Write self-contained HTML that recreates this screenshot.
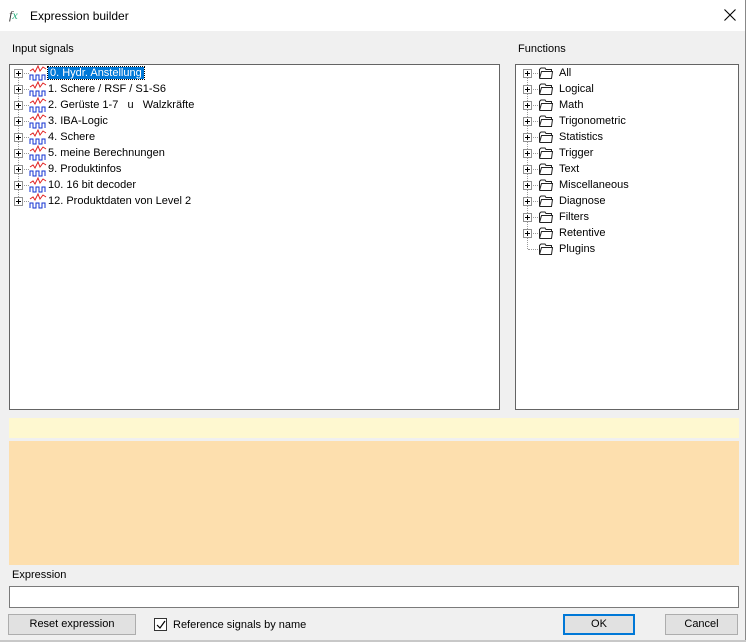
<!DOCTYPE html><html><head><style>
body{margin:0;width:746px;height:642px;background:#f0f0f0;font-family:"Liberation Sans",sans-serif;font-size:11px;color:#000;position:relative;overflow:hidden}
.a{position:absolute}
.tree div{height:16px;line-height:16px;position:relative;white-space:nowrap;font-size:11px}
.pl{position:absolute;width:7px;height:7px;border:1px solid #919191;background:#fff;left:0;top:4px}
.pl:before{content:"";position:absolute;left:1px;top:3px;width:5px;height:1px;background:#000}
.pl:after{content:"";position:absolute;left:3px;top:1px;width:1px;height:5px;background:#000}
.btn{position:absolute;background:#e1e1e1;border:1px solid #adadad;text-align:center;line-height:19px;box-sizing:border-box}
</style></head><body>
<div class="a" style="left:0;top:0;width:746px;height:31px;background:#fff"></div>
<div class="a" style="left:9px;top:8px;font-size:12px;color:#333;font-family:'Liberation Serif',serif;font-style:italic">f<span style="color:#2a7">x</span></div>
<div class="a" style="left:30px;top:9px;font-size:12px">Expression builder</div>
<svg class="a" style="left:724px;top:9px" width="12" height="12"><path d="M0.5 0.5 L11.5 11.5 M11.5 0.5 L0.5 11.5" stroke="#000" stroke-width="1.1"/></svg>
<div class="a" style="left:745px;top:0;width:1px;height:642px;background:#888"></div>
<div class="a" style="left:12px;top:43px">Input signals</div>
<div class="a" style="left:518px;top:43px">Functions</div>
<div class="a" style="left:9px;top:64px;width:489px;height:344px;border:1px solid #646464;background:#fff"></div>
<div class="a" style="left:515px;top:64px;width:222px;height:344px;border:1px solid #646464;background:#fff"></div>
<div class="a tree" style="left:14px;top:65px">
<div style="border-left:1px dotted #999;position:absolute;left:4px;top:8px;height:128px;width:0"></div>
<script>
var s=["0. Hydr. Anstellung","1. Schere / RSF / S1-S6","2. Gerüste 1-7&nbsp;&nbsp; u&nbsp;&nbsp; Walzkräfte","3. IBA-Logic","4. Schere","5. meine Berechnungen","9. Produktinfos","10. 16 bit decoder","12. Produktdaten von Level 2"];
for(var i=0;i<s.length;i++){document.write('<div><span class="pl"></span><span class="a" style="left:10px;top:8px;width:5px;border-top:1px dotted #999"></span><svg class="a" style="left:15px;top:0" width="18" height="16"><path d="M1 6 L4 4 L6 7 L9 1 L11 6 L14 2 L17 4" stroke="#e02020" fill="none"/><path d="M1 15 V10 H4 V15 H7 V10 H10 V15 H13 V10 H16 V15" stroke="#1030d0" fill="none"/></svg><span style="margin-left:34px;'+(i==0?'background:#0078d7;color:#fff;outline:1px dotted #000;padding:0 2px':'')+'">'+s[i]+'</span></div>');}
</script>
</div>
<div class="a tree" style="left:523px;top:65px">
<div style="border-left:1px dotted #999;position:absolute;left:4px;top:8px;height:176px;width:0"></div>
<script>
var f=["All","Logical","Math","Trigonometric","Statistics","Trigger","Text","Miscellaneous","Diagnose","Filters","Retentive","Plugins"];
for(var i=0;i<f.length;i++){document.write('<div>'+(i<11?'<span class="pl"></span>':'')+'<span class="a" style="left:'+(i<11?10:5)+'px;top:8px;width:'+(i<11?5:10)+'px;border-top:1px dotted #999"></span><svg class="a" style="left:15px;top:1px" width="16" height="14"><path d="M1.5 12.5 V3.5 L3 2 H7 L8 3.5 H13.5 V5.5 M1.5 12.5 H13.5 L14.5 5.5 H3.5 L1.5 12.5" stroke="#222" fill="none"/></svg><span style="margin-left:36px">'+f[i]+'</span></div>');}
</script>
</div>
<div class="a" style="left:9px;top:418px;width:730px;height:20px;background:#fef8d0"></div>
<div class="a" style="left:9px;top:441px;width:730px;height:124px;background:#fddfae"></div>
<div class="a" style="left:12px;top:569px">Expression</div>
<div class="a" style="left:9px;top:586px;width:728px;height:20px;border:1px solid #7a7a7a;background:#fff"></div>
<div class="btn" style="left:8px;top:614px;width:128px;height:21px">Reset expression</div>
<div class="a" style="left:154px;top:618px;width:11px;height:11px;border:1px solid #333;background:#fff"></div>
<svg class="a" style="left:155px;top:619px" width="12" height="12"><path d="M2 6 L5 9 L10 2" stroke="#000" stroke-width="1.2" fill="none"/></svg>
<div class="a" style="left:173px;top:619px">Reference signals by name</div>
<div class="btn" style="left:563px;top:614px;width:72px;height:21px;border:2px solid #0078d7;line-height:17px">OK</div>
<div class="btn" style="left:665px;top:614px;width:73px;height:21px">Cancel</div>
<div class="a" style="left:0;top:640px;width:746px;height:2px;background:#c8c8c8"></div>
</body></html>
